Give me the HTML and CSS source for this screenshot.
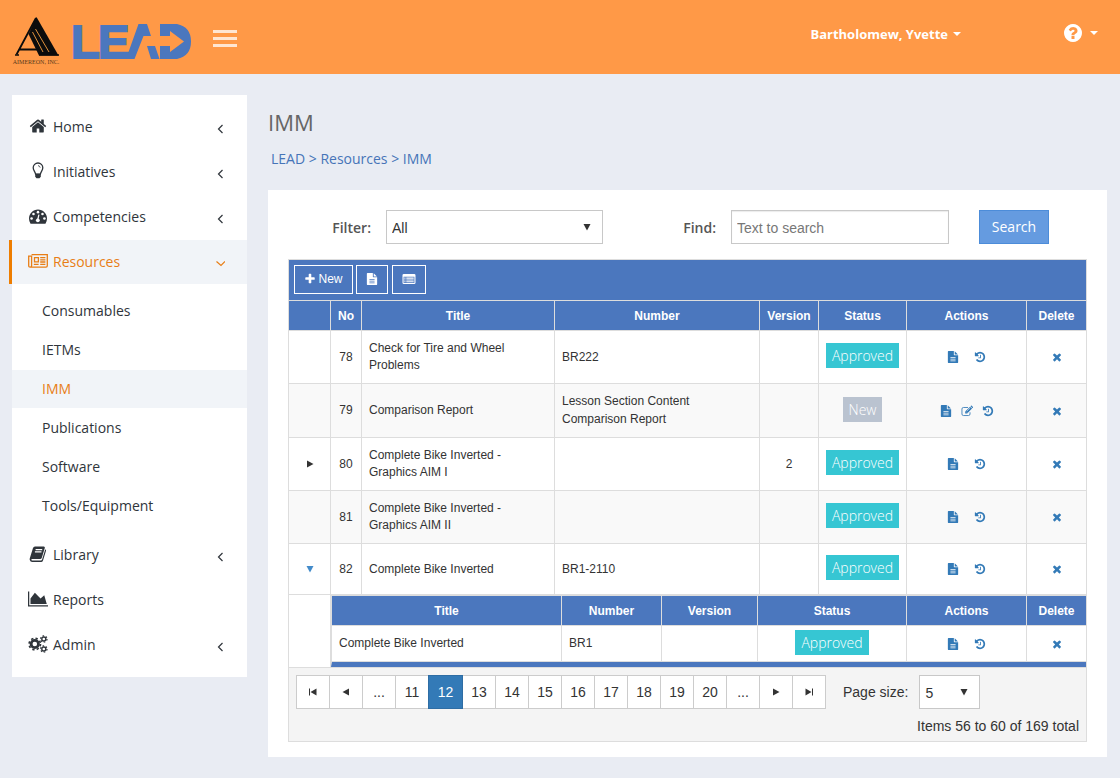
FILE: index.html
```html
<!DOCTYPE html>
<html lang="en">
<head>
<meta charset="utf-8">
<meta name="viewport" content="width=device-width, initial-scale=1">
<title>LEAD - IMM</title>
<link rel="stylesheet" href="styles.css">
</head>
<body>
<svg class="sprite" aria-hidden="true">
  <symbol id="i-home" viewBox="0 0 1792 1792"><path d="M1472 992v480q0 26-19 45t-45 19h-384v-384h-256v384h-384q-26 0-45-19t-19-45v-480q0-1 .5-3t.5-3l575-474 575 474q1 2 1 6zm223-69l-62 74q-8 9-21 11h-3q-13 0-21-7l-692-577-692 577q-12 8-24 7-13-2-21-11l-62-74q-8-10-7-23.500t11-21.500l719-599q32-26 76-26t76 26l244 204v-195q0-14 9-23t23-9h192q14 0 23 9t9 23v408l219 182q10 8 11 21.500t-7 23.500z"/></symbol>
  <symbol id="i-bulb" viewBox="0 0 18 18"><path d="M6.600 12.200C6.400 9.800 4.200 8.600 4.200 5.800a4.800 4.800 0 0 1 9.600 0c0 2.800-2.200 4-2.400 6.400z" fill="none" stroke="currentColor" stroke-width="1.300"/><path d="M9 3.600q1.800.2 2.200 2" fill="none" stroke="currentColor" stroke-width=".8"/><path d="M6.200 11.800h5.600v3l-1.300 1.500h-3l-1.300-1.500z"/></symbol>
  <symbol id="i-dash" viewBox="0 0 1792 1792"><path d="M1792 1152q0 261-141 483-19 29-54 29H195q-35 0-54-29Q0 1414 0 1152q0-182 71-348t191-286 286-191 348-71 348 71 286 191 191 286 71 348z"/><g fill="#fff"><circle cx="256" cy="1152" r="128"/><circle cx="448" cy="704" r="128"/><circle cx="896" cy="512" r="128"/><circle cx="1344" cy="704" r="128"/><circle cx="1536" cy="1152" r="128"/><circle cx="880" cy="1330" r="190"/><path d="M820 1200l101-420q25-60 80-40 50 25 36 75L940 1240z"/></g></symbol>
  <symbol id="i-news" viewBox="0 0 20 16"><g fill="none" stroke="currentColor" stroke-width="1.300"><path d="M3.600 1.600h15.700v11.200q0 1.300-1.300 1.300H2.200Q.7 14.100.7 12.800V3.200h2.900v9.600q0 1.300-1.400 1.300"/><path d="M6.500 4.600h3.900v4.300H6.500z"/><path d="M12.200 4.600h5.200M12.200 6.800h5.200M12.200 9h5.200M5.800 11.400h4.800M12.200 11.400h5.200"/></g></symbol>
  <symbol id="i-book" viewBox="0 0 18 18"><path d="M6 1.500h8.800q1.400.1 1 1.500l-3 9.800q-.4 1.200-1.600 1.200H3.200q-.9 0-.9.700 0 .8 1 .8h8.600q.9 0 1.200-.9l3.200-10.400q1 .5.700 1.500l-3 9.700q-.5 1.500-1.900 1.500H3.200Q1.300 16.900.8 15q-.3-.9 0-1.800L4 3q.5-1.400 2-1.500z"/><path d="M6.600 4.600h6.600M5.900 6.900h6.600" stroke="#fff" stroke-width="1.100"/></symbol>
  <symbol id="i-area" viewBox="0 0 2048 1792"><path d="M2048 1536v128H0V128h128v1408h1920zM1664 512l256 896H256V832l448-576 576 576z"/></symbol>
  <symbol id="i-cogs" viewBox="0 0 20 18"><g fill="none" stroke="currentColor"><circle cx="6.800" cy="9" r="3.700" stroke-width="2.800"/><circle cx="6.800" cy="9" r="5.700" stroke-width="1.700" stroke-dasharray="2.300 2.180"/><circle cx="15.800" cy="4" r="2" stroke-width="1.400"/><circle cx="15.800" cy="4" r="3.200" stroke-width="1.200" stroke-dasharray="1.600 1.750"/><circle cx="15.800" cy="14" r="2" stroke-width="1.400"/><circle cx="15.800" cy="14" r="3.200" stroke-width="1.200" stroke-dasharray="1.600 1.750"/></g></symbol>
  <symbol id="i-left" viewBox="0 0 10 10"><path d="M7.500 1L3.500 5l4 4" fill="none" stroke="currentColor" stroke-width="1.200"/></symbol>
  <symbol id="i-down" viewBox="0 0 10 10"><path d="M1.500 2.500L6 6.500l4-4" fill="none" stroke="currentColor" stroke-width="1.200"/></symbol>
  <symbol id="i-plus" viewBox="0 0 1792 1792"><path d="M1600 736v192q0 40-28 68t-68 28h-416v416q0 40-28 68t-68 28H800q-40 0-68-28t-28-68v-416H288q-40 0-68-28t-28-68V736q0-40 28-68t68-28h416V224q0-40 28-68t68-28h192q40 0 68 28t28 68v416h416q40 0 68 28t28 68z"/></symbol>
  <symbol id="i-file" viewBox="0 0 1792 1792"><path fill-rule="evenodd" d="M1596 476q14 14 28 36h-472V40q22 14 36 28zm-476 164h544v1056q0 40-28 68t-68 28H224q-40 0-68-28t-28-68V96q0-40 28-68t68-28h800v544q0 40 28 68t68 28zM512 900v100h768V900zm0 256v100h768v-100zm0 256v100h768v-100z"/></symbol>
  <symbol id="i-list" viewBox="0 0 14 12"><path fill-rule="evenodd" d="M1.800 1h10.400q1.300 0 1.300 1.200v7.600q0 1.200-1.300 1.200H1.800Q.5 11 .5 9.800V2.200Q.5 1 1.800 1zM1.600 3.800V10h10.800V3.800z"/><path d="M2.300 4.600h1.200v1.100H2.300zm2 0h7.400v1.100H4.300zM2.300 6.400h1.200v1.100H2.300zm2 0h7.400v1.100H4.300zM2.300 8.200h1.200v1.100H2.300zm2 0h7.400v1.100H4.300z"/></symbol>
  <symbol id="i-edit" viewBox="0 0 14 14"><path d="M10.500 8.500v2q0 1.800-1.800 1.800H2.900q-1.800 0-1.800-1.800V4.700q0-1.800 1.800-1.800h5.300" fill="none" stroke="currentColor" stroke-width="1"/><path d="M4.900 9.900V7.600l5.700-5.700 2.300 2.300-5.700 5.700zM11.100 1.400l.5-.5q.5-.4 1 0l1.300 1.300q.4.500 0 1l-.5.500z"/><path d="M6 7.700l1.100 1.100M7 7l3.800-3.800" stroke="#fff" stroke-width=".6"/></symbol>
  <symbol id="i-history" viewBox="0 0 1792 1792"><path d="M1664 896q0 156-61 298t-164 245-245 164-298 61q-172 0-327-72.500t-264-204.500q-7-10-6.500-22.500t8.500-20.500l137-138q10-9 25-9 16 2 23 12 73 95 179 147t225 52q104 0 198.500-40.500t163.500-109.500 109.500-163.500 40.500-198.500-40.500-198.500-109.500-163.500-163.500-109.500-198.500-40.500q-98 0-188 35.500t-160 101.500l137 138q31 30 14 69-17 40-59 40H192q-26 0-45-19t-19-45V256q0-42 40-59 39-17 69 14l130 129q107-101 244.500-156.500T896 128q156 0 298 61t245 164 164 245 61 298zm-640-288v448q0 14-9 23t-23 9H672q-14 0-23-9t-9-23v-64q0-14 9-23t23-9h224V608q0-14 9-23t23-9h64q14 0 23 9t9 23z"/></symbol>
  <symbol id="i-times" viewBox="0 0 1792 1792"><path d="M1490 1322q0 40-28 68l-136 136q-28 28-68 28t-68-28l-294-294-294 294q-28 28-68 28t-68-28l-136-136q-28-28-28-68t28-68l294-294-294-294q-28-28-28-68t28-68l136-136q28-28 68-28t68 28l294 294 294-294q28-28 68-28t68 28l136 136q28 28 28 68t-28 68l-294 294 294 294q28 28 28 68z"/></symbol>
  <symbol id="i-help" viewBox="128 128 1536 1536"><path d="M1024 1376v-192q0-14-9-23t-23-9H800q-14 0-23 9t-9 23v192q0 14 9 23t23 9h192q14 0 23-9t9-23zm256-672q0-88-55.500-163t-138.500-116-170-41q-243 0-371 213-15 24 8 42l132 100q7 6 19 6 16 0 25-12 53-68 86-92 34-24 86-24 48 0 85.500 26t37.500 59q0 38-20 61t-68 45q-63 28-115.500 86.500t-52.500 125.500v36q0 14 9 23t23 9h192q14 0 23-9t9-23q0-19 21.500-49.500t54.500-49.500q32-18 49-28.500t46-35 44.500-48 28-60.500 12.500-81zm384 192q0 209-103 385.500t-279.500 279.500-385.500 103-385.500-103-279.500-279.500-103-385.500 103-385.500 279.500-279.500 385.500-103 385.500 103 279.500 279.500 103 385.500z"/></symbol>
  <symbol id="i-tri-right" viewBox="0 0 10 10"><path d="M2 1.500L8.500 5 2 8.500z"/></symbol>
  <symbol id="i-tri-left" viewBox="0 0 10 10"><path d="M8 1.500L1.500 5 8 8.500z"/></symbol>
  <symbol id="i-tri-down" viewBox="0 0 10 10"><path d="M1.500 2h7L5 8.500z"/></symbol>
  <symbol id="i-first" viewBox="0 0 10 10"><path d="M1 1.500h1v7H1zM8.500 1.500L2.500 5l6 3.500z"/></symbol>
  <symbol id="i-last" viewBox="0 0 10 10"><path d="M8 1.500h1v7H8zM1.500 1.500L7.500 5l-6 3.500z"/></symbol>
</svg>

<header class="topbar">
  <a class="brand" href="#" aria-label="Aimereon LEAD">
    <svg class="brand-mark" width="50" height="52" viewBox="0 0 50 52">
      <path d="M24.500 3L46.500 41.500H27L16.500 20z" fill="#0c0c0c"/>
      <path d="M24 4L4.500 40.500M7.500 35.500h18" fill="none" stroke="#0c0c0c" stroke-width="1.800"/>
      <path d="M3 41h4M27 41h20" stroke="#0c0c0c" stroke-width="1.400"/>
      <path d="M20.500 18l10.500 20M23.500 15l13.500 23" fill="none" stroke="#e0913c" stroke-width="1"/>
      <text class="mark-text" x="24" y="50" text-anchor="middle">AIMEREON, INC.</text>
    </svg>
    <svg class="brand-word" width="128" height="56" viewBox="-4 -10 128 56">
      <text class="word-text" x="-2" y="34">L</text>
      <text class="word-text" x="25" y="34">E</text>
      <path d="M53 35L65.500 0h8.500l4 12h-7.500L61.500 35zM74 22h8l4.500 13H78z"/>
      <path d="M87 0h17q14 3 14 17.500T104 35H87V22h10v6l14-10.500L97 7v5H87z"/>
    </svg>
  </a>
  <button class="menu-btn" type="button" aria-label="Toggle menu"><span></span><span></span><span></span></button>
  <button class="top-link user" type="button">Bartholomew, Yvette<i class="caret"></i></button>
  <button class="top-link help" type="button" aria-label="Help"><svg class="help-icon"><use href="#i-help"/></svg><i class="caret"></i></button>
</header>

<div class="layout">
  <nav class="sidebar" aria-label="Main">
    <ul class="nav">
      <li><a class="nav-link" href="#"><svg class="nav-icon"><use href="#i-home"/></svg>Home<svg class="chev"><use href="#i-left"/></svg></a></li>
      <li><a class="nav-link" href="#"><svg class="nav-icon"><use href="#i-bulb"/></svg>Initiatives<svg class="chev"><use href="#i-left"/></svg></a></li>
      <li><a class="nav-link" href="#"><svg class="nav-icon"><use href="#i-dash"/></svg>Competencies<svg class="chev"><use href="#i-left"/></svg></a></li>
      <li>
        <a class="nav-link active" href="#"><svg class="nav-icon"><use href="#i-news"/></svg>Resources<svg class="chev"><use href="#i-down"/></svg></a>
        <ul class="subnav">
          <li><a class="sub-link" href="#">Consumables</a></li>
          <li><a class="sub-link" href="#">IETMs</a></li>
          <li><a class="sub-link current" href="#">IMM</a></li>
          <li><a class="sub-link" href="#">Publications</a></li>
          <li><a class="sub-link" href="#">Software</a></li>
          <li><a class="sub-link" href="#">Tools/Equipment</a></li>
        </ul>
      </li>
      <li><a class="nav-link" href="#"><svg class="nav-icon"><use href="#i-book"/></svg>Library<svg class="chev"><use href="#i-left"/></svg></a></li>
      <li><a class="nav-link" href="#"><svg class="nav-icon"><use href="#i-area"/></svg>Reports</a></li>
      <li><a class="nav-link" href="#"><svg class="nav-icon"><use href="#i-cogs"/></svg>Admin<svg class="chev"><use href="#i-left"/></svg></a></li>
    </ul>
  </nav>

  <main class="content">
    <h1 class="page-title">IMM</h1>
    <div class="crumbs"><a href="#">LEAD</a> &gt; <a href="#">Resources</a> &gt; <a href="#">IMM</a></div>

    <section class="panel">
      <form class="filters">
        <label class="field-label" for="filter">Filter:</label>
        <span class="select"><select id="filter"><option>All</option></select><svg class="arrow"><use href="#i-tri-down"/></svg></span>
        <label class="field-label" for="find">Find:</label>
        <input class="find" id="find" type="text" placeholder="Text to search">
        <button class="search-btn" type="button">Search</button>
      </form>

      <div class="grid">
        <div class="toolbar">
          <button class="tool tool-new" type="button"><svg class="icon"><use href="#i-plus"/></svg>New</button>
          <button class="tool tool-file" type="button" aria-label="Report"><svg class="icon"><use href="#i-file"/></svg></button>
          <button class="tool tool-list" type="button" aria-label="List"><svg class="icon-list"><use href="#i-list"/></svg></button>
        </div>
        <table class="table">
          <colgroup><col class="c-exp"><col class="c-no"><col class="c-title"><col><col class="c-ver"><col class="c-status"><col class="c-act"><col class="c-del"></colgroup>
          <thead><tr><th></th><th>No</th><th>Title</th><th>Number</th><th>Version</th><th>Status</th><th>Actions</th><th>Delete</th></tr></thead>
          <tbody>
            <tr class="row">
              <td></td><td class="mid">78</td><td>Check for Tire and Wheel Problems</td><td>BR222</td><td class="mid"></td>
              <td class="mid status"><span class="badge">Approved</span></td>
              <td><div class="actions"><a href="#" aria-label="View"><svg class="icon"><use href="#i-file"/></svg></a><a href="#" aria-label="History"><svg class="icon"><use href="#i-history"/></svg></a></div></td>
              <td><div class="actions"><a href="#" aria-label="Delete"><svg class="icon"><use href="#i-times"/></svg></a></div></td>
            </tr>
            <tr class="row alt tall">
              <td></td><td class="mid">79</td><td>Comparison Report</td><td class="loose">Lesson Section Content<br>Comparison Report</td><td class="mid"></td>
              <td class="mid status"><span class="badge badge-new">New</span></td>
              <td><div class="actions three"><a href="#" aria-label="View"><svg class="icon"><use href="#i-file"/></svg></a><a href="#" aria-label="Edit"><svg class="icon"><use href="#i-edit"/></svg></a><a href="#" aria-label="History"><svg class="icon"><use href="#i-history"/></svg></a></div></td>
              <td><div class="actions"><a href="#" aria-label="Delete"><svg class="icon"><use href="#i-times"/></svg></a></div></td>
            </tr>
            <tr class="row">
              <td><button class="expand" type="button" aria-label="Expand"><svg class="tri"><use href="#i-tri-right"/></svg></button></td><td class="mid">80</td><td>Complete Bike Inverted -<br>Graphics AIM I</td><td></td><td class="mid">2</td>
              <td class="mid status"><span class="badge">Approved</span></td>
              <td><div class="actions"><a href="#" aria-label="View"><svg class="icon"><use href="#i-file"/></svg></a><a href="#" aria-label="History"><svg class="icon"><use href="#i-history"/></svg></a></div></td>
              <td><div class="actions"><a href="#" aria-label="Delete"><svg class="icon"><use href="#i-times"/></svg></a></div></td>
            </tr>
            <tr class="row alt">
              <td></td><td class="mid">81</td><td>Complete Bike Inverted -<br>Graphics AIM II</td><td></td><td class="mid"></td>
              <td class="mid status"><span class="badge">Approved</span></td>
              <td><div class="actions"><a href="#" aria-label="View"><svg class="icon"><use href="#i-file"/></svg></a><a href="#" aria-label="History"><svg class="icon"><use href="#i-history"/></svg></a></div></td>
              <td><div class="actions"><a href="#" aria-label="Delete"><svg class="icon"><use href="#i-times"/></svg></a></div></td>
            </tr>
            <tr class="row single">
              <td><button class="expand open" type="button" aria-label="Collapse"><svg class="tri"><use href="#i-tri-down"/></svg></button></td><td class="mid">82</td><td>Complete Bike Inverted</td><td>BR1-2110</td><td class="mid"></td>
              <td class="mid status"><span class="badge">Approved</span></td>
              <td><div class="actions"><a href="#" aria-label="View"><svg class="icon"><use href="#i-file"/></svg></a><a href="#" aria-label="History"><svg class="icon"><use href="#i-history"/></svg></a></div></td>
              <td><div class="actions"><a href="#" aria-label="Delete"><svg class="icon"><use href="#i-times"/></svg></a></div></td>
            </tr>
            <tr>
              <td></td>
              <td class="nest" colspan="7">
                <table class="table nested">
                  <colgroup><col><col class="n-num"><col class="n-ver"><col class="n-status"><col class="c-act"><col class="c-del"></colgroup>
                  <thead><tr><th>Title</th><th>Number</th><th>Version</th><th>Status</th><th>Actions</th><th>Delete</th></tr></thead>
                  <tbody><tr class="row-nest">
                    <td>Complete Bike Inverted</td><td>BR1</td><td></td>
                    <td class="mid status"><span class="badge">Approved</span></td>
                    <td><div class="actions"><a href="#" aria-label="View"><svg class="icon"><use href="#i-file"/></svg></a><a href="#" aria-label="History"><svg class="icon"><use href="#i-history"/></svg></a></div></td>
                    <td><div class="actions"><a href="#" aria-label="Delete"><svg class="icon"><use href="#i-times"/></svg></a></div></td>
                  </tr></tbody>
                </table>
              </td>
            </tr>
          </tbody>
        </table>
        <div class="pager">
          <div class="pages">
            <button type="button" aria-label="First page"><svg class="tri"><use href="#i-first"/></svg></button>
            <button type="button" aria-label="Previous page"><svg class="tri"><use href="#i-tri-left"/></svg></button>
            <button type="button">...</button>
            <button type="button">11</button>
            <button class="on" type="button" aria-current="page">12</button>
            <button type="button">13</button>
            <button type="button">14</button>
            <button type="button">15</button>
            <button type="button">16</button>
            <button type="button">17</button>
            <button type="button">18</button>
            <button type="button">19</button>
            <button type="button">20</button>
            <button type="button">...</button>
            <button type="button" aria-label="Next page"><svg class="tri"><use href="#i-tri-right"/></svg></button>
            <button type="button" aria-label="Last page"><svg class="tri"><use href="#i-last"/></svg></button>
          </div>
          <label class="size-label" for="size">Page size:</label>
          <span class="select size"><select id="size"><option>5</option></select><svg class="arrow"><use href="#i-tri-down"/></svg></span>
          <div class="total">Items 56 to 60 of 169 total</div>
        </div>
      </div>
    </section>
  </main>
</div>
</body>
</html>
```

FILE: styles.css
```css
* { box-sizing: border-box; }
body {
  margin: 0;
  background: #e9ecf3;
  color: #333;
  font-family: "Open Sans", sans-serif;
  font-size: 14px;
  line-height: 20px;
}
button, input, select { font: inherit; color: inherit; margin: 0; border-radius: 0; }
button { cursor: pointer; padding: 0; background: none; border: 0; }
a { color: #4674b8; text-decoration: none; }
ul { list-style: none; margin: 0; padding: 0; }
svg { display: block; fill: currentColor; flex: none; }
.sprite { position: absolute; width: 0; height: 0; }

/* Header */
.topbar {
  display: flex;
  align-items: flex-start;
  height: 74px;
  padding: 14px 22px 0 12px;
  background: #ff9947;
  color: #fff;
}
.brand { display: flex; }
.brand-word { margin-left: 7px; fill: #4b77be; overflow: visible; }
.mark-text { font: 6px "Liberation Serif", serif; fill: #5a3a1c; }
.word-text { font: 700 47px "Liberation Sans", Arial, sans-serif; stroke: #4b77be; stroke-width: 2; }
.menu-btn { display: grid; gap: 4px; width: 24px; margin: 16px 0 0 16px; }
.menu-btn span { height: 3px; background: #ffe6d2; }
.top-link { display: flex; align-items: center; margin-top: 10px; }
.user { margin-left: auto; font-size: 13px; font-weight: 700; }
.help { margin-left: 103px; }
.help-icon { width: 18px; height: 18px; margin-right: 8px; }
.caret { margin-left: 5px; border: 4px solid transparent; border-top-color: #fff; border-bottom: 0; }
.help .caret { margin-left: 0; }

/* Page */
.layout {
  display: grid;
  grid-template-columns: 235px 1fr;
  gap: 21px;
  align-items: start;
  padding: 21px 13px 21px 12px;
}
.sidebar { padding: 10px 0; background: #fff; }
.nav { display: grid; gap: 1px; }
.nav-link {
  display: flex;
  align-items: center;
  gap: 5px;
  height: 44px;
  padding: 0 22px 0 16px;
  color: #2f353b;
}
.nav-icon { width: 20px; height: 18px; margin-bottom: 3px; }
.chev { width: 10px; height: 10px; margin: 4px 0 0 auto; }
.nav-link.active { background: #f1f4f8; color: #e87e16; box-shadow: -3px 0 #ee7d00; }
.subnav { display: grid; gap: 1px; padding: 8px 0 7px; }
.sub-link { display: flex; align-items: center; height: 38px; padding-left: 30px; color: #2f353b; }
.sub-link.current { background: #f1f4f8; color: #e87e16; }

.content { min-width: 0; }
.page-title { margin: 13px 0 0; color: #666; font-size: 22px; font-weight: 400; line-height: 28px; }
.crumbs { margin: 13px 0 21px 3px; color: #4674b8; }
.panel { padding: 20px 20px 15px; background: #fff; }

/* Filter form */
.filters {
  display: grid;
  grid-template-columns: 83px 217px 98px 218px 85px;
  column-gap: 15px;
  align-items: center;
  margin-bottom: 15px;
}
.field-label { padding-top: 2px; text-align: right; font-weight: 600; color: #555; }
.select { position: relative; display: block; font-family: "Liberation Sans", Arial, sans-serif; }
.select select {
  width: 100%;
  height: 34px;
  padding: 2px 5px 0;
  appearance: none;
  background: #fff;
  border: 1px solid #c8c8c8;
}
.arrow { position: absolute; right: 11px; top: 12px; width: 10px; height: 10px; pointer-events: none; }
.find {
  width: 100%;
  height: 34px;
  padding: 2px 5px 0;
  border: 1px solid #c8c8c8;
  box-shadow: inset 0 1px 1px rgba(0, 0, 0, .08);
  font-family: "Liberation Sans", Arial, sans-serif;
}
.find::placeholder { color: #777; opacity: 1; }
.search-btn { justify-self: end; width: 70px; height: 34px; background: #659be0; border: 1px solid #4c8cd9; color: #fff; }

/* Grid */
.grid { border: 1px solid #ddd; font-family: "Liberation Sans", Arial, sans-serif; font-size: 12px; }
.toolbar { display: flex; gap: 4px; height: 41px; padding: 5px; background: #4b77be; border-bottom: 1px solid #ddd; }
.tool { display: flex; align-items: center; justify-content: center; gap: 2px; height: 29px; padding-bottom: 2px; border: 1px solid #fff; color: #fff; }
.tool-new { width: 59px; margin-right: -1px; }
.tool-file { width: 32px; }
.tool-list { width: 34px; }
.icon { width: 12px; height: 12px; }
.icon-list { width: 14px; height: 12px; }
.table { width: 100%; table-layout: fixed; border-collapse: separate; border-spacing: 0; }
.c-exp { width: 42px; }
.c-no { width: 31px; }
.c-title { width: 193px; }
.c-ver { width: 59px; }
.c-status { width: 88px; }
.c-act { width: 120px; }
.c-del { width: 59px; }
.n-num { width: 100px; }
.n-ver { width: 96px; }
.n-status { width: 149px; }
.table th { height: 30px; padding: 2px 0 0; background: #4b77be; color: #fff; line-height: 17px; }
.table th, .table td { border-right: 1px solid #ddd; border-bottom: 1px solid #ddd; }
.table th:last-child, .table td:last-child { border-right: 0; }
.table td { padding: 0 7px; line-height: 17px; vertical-align: middle; }
.table td.loose { padding-bottom: 2px; line-height: 18px; }
.table td.mid { padding: 0; text-align: center; }
.table td.status { padding-bottom: 3px; }
.table td.nest { padding: 0; }
.row { height: 53px; }
.row.tall { height: 54px; }
.row.single { height: 51px; }
.alt { background: #f9f9f9; }
.row-nest { height: 36px; }
.nested { border-top: 1px solid #ddd; border-left: 1px solid #ddd; border-bottom: 5px solid #4b77be; }
.badge {
  display: inline-block;
  padding: 0 6px;
  background: #36c6d3;
  color: #fff;
  font: 300 14px/25px "Open Sans", sans-serif;
  vertical-align: middle;
}
.badge-new { background: #bac3d0; }
.actions { display: flex; justify-content: center; gap: 15px; }
.actions.three { gap: 9px; }
.actions a { color: #337ab7; }
.expand { display: block; margin: 0 auto; }
.expand.open { color: #428bca; }
.tri { width: 10px; height: 10px; margin: 0 auto; }

/* Pager */
.pager {
  display: flex;
  flex-wrap: wrap;
  align-items: center;
  padding: 7px 7px 5px;
  background: #f4f4f4;
  font-size: 14px;
}
.pages { display: flex; }
.pages button { width: 34px; height: 34px; background: #fff; border: 1px solid #ccc; }
.pages button + button { margin-left: -1px; }
.pages .on { position: relative; width: 35px; background: #337ab7; border-color: #2e6da4; color: #fff; }
.size-label { margin: 0 11px 0 17px; }
.select.size { width: 61px; }
.total { flex: 1 0 100%; margin-top: 7px; text-align: right; }
```
